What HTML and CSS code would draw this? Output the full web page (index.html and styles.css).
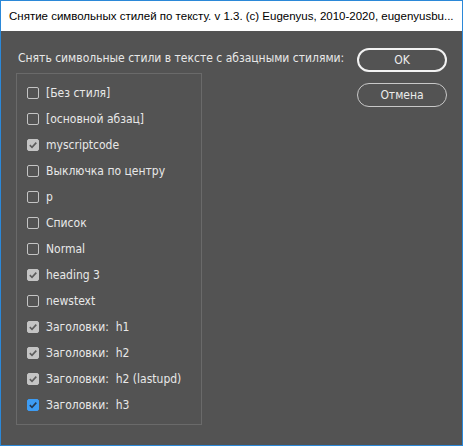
FILE: index.html
```html
<!DOCTYPE html>
<html lang="ru">
<head>
<meta charset="utf-8">
<title>Снятие символьных стилей</title>
<link rel="stylesheet" href="styles.css">
</head>
<body>
<div class="window">
  <div class="titlebar"><span class="title">Снятие символьных стилей по тексту. v 1.3. (c) Eugenyus, 2010-2020, eugenyusbu...</span></div>
  <div class="content">
    <div class="left">
      <div class="label">Снять символьные стили в тексте с абзацными стилями:</div>
      <div class="panel">
        <div class="item"><span class="cb"></span><span class="txt">[Без стиля]</span></div>
        <div class="item"><span class="cb"></span><span class="txt">[основной абзац]</span></div>
        <div class="item"><span class="cb checked"><svg viewBox="0 0 12 12"><path d="M2.8 6.2 L5 8.3 L9.3 3.6"/></svg></span><span class="txt">myscriptcode</span></div>
        <div class="item"><span class="cb"></span><span class="txt">Выключка по центру</span></div>
        <div class="item"><span class="cb"></span><span class="txt">p</span></div>
        <div class="item"><span class="cb"></span><span class="txt">Список</span></div>
        <div class="item"><span class="cb"></span><span class="txt">Normal</span></div>
        <div class="item"><span class="cb checked"><svg viewBox="0 0 12 12"><path d="M2.8 6.2 L5 8.3 L9.3 3.6"/></svg></span><span class="txt">heading 3</span></div>
        <div class="item"><span class="cb"></span><span class="txt">newstext</span></div>
        <div class="item"><span class="cb checked"><svg viewBox="0 0 12 12"><path d="M2.8 6.2 L5 8.3 L9.3 3.6"/></svg></span><span class="txt">Заголовки:&nbsp; h1</span></div>
        <div class="item"><span class="cb checked"><svg viewBox="0 0 12 12"><path d="M2.8 6.2 L5 8.3 L9.3 3.6"/></svg></span><span class="txt">Заголовки:&nbsp; h2</span></div>
        <div class="item"><span class="cb checked"><svg viewBox="0 0 12 12"><path d="M2.8 6.2 L5 8.3 L9.3 3.6"/></svg></span><span class="txt">Заголовки:&nbsp; h2 (lastupd)</span></div>
        <div class="item"><span class="cb checked focus"><svg viewBox="0 0 12 12"><path d="M2.8 6.2 L5 8.3 L9.3 3.6"/></svg></span><span class="txt">Заголовки:&nbsp; h3</span></div>
      </div>
    </div>
    <div class="right">
      <button class="btn default">OK</button>
      <button class="btn">Отмена</button>
    </div>
  </div>
</div>
</body>
</html>
```

FILE: styles.css
```css
html, body {
  margin: 0;
  padding: 0;
  background: #535353;
}
.window {
  box-sizing: border-box;
  width: 463px;
  height: 446px;
  border: 1px solid #2b88d8;
  background: #535353;
  display: flex;
  flex-direction: column;
}
.titlebar {
  height: 30px;
  background: #ffffff;
  display: flex;
  align-items: center;
  padding: 0 8px 0 8px;
  box-sizing: border-box;
}
.title {
  font-family: "Liberation Sans", Arial, sans-serif;
  font-size: 11.5px;
  color: #000;
  white-space: nowrap;
}
.content {
  flex: 1;
  display: flex;
  padding: 0 15px 0 15px;
  font-family: "DejaVu Sans Condensed", "DejaVu Sans", sans-serif;
  font-stretch: condensed;
  font-size: 12px;
  color: #e8e8e8;
}
.left {
  display: flex;
  flex-direction: column;
}
.label {
  margin: 19px 0 0 2px;
  line-height: 16px;
  height: 16px;
  white-space: nowrap;
}
.panel {
  margin-top: 7px;
  width: 186px;
  height: 352px;
  box-sizing: border-box;
  border: 1px solid #6a6a6a;
  padding: 6px 0 0 10px;
}
.item {
  height: 26px;
  display: flex;
  align-items: center;
}
.cb {
  width: 12px;
  height: 12px;
  box-sizing: border-box;
  border: 1.5px solid #c4c4c4;
  border-radius: 2px;
  margin-right: 7px;
  position: relative;
  flex: none;
}
.cb svg {
  position: absolute;
  left: -1.5px;
  top: -1.5px;
  width: 12px;
  height: 12px;
}
.cb svg path {
  fill: none;
  stroke: #5c5c5c;
  stroke-width: 1.6;
}
.cb.checked {
  background: #c4c4c4;
}
.cb.checked.focus {
  background: #3d9cf4;
  border-color: #3d9cf4;
}
.cb.focus svg path {
  stroke: #263a52;
}
.txt {
  white-space: nowrap;
  line-height: 16px;
}
.right {
  margin-left: auto;
  display: flex;
  flex-direction: column;
  padding-top: 17px;
  gap: 11px;
}
.btn {
  width: 90px;
  height: 24px;
  box-sizing: border-box;
  border-radius: 12px;
  background: transparent;
  border: 1px solid #c8c8c8;
  color: #ececec;
  font-family: "DejaVu Sans Condensed", "DejaVu Sans", sans-serif;
  font-stretch: condensed;
  font-size: 12px;
  padding: 0;
}
.btn.default {
  border: 2px solid #f2f2f2;
}
```
